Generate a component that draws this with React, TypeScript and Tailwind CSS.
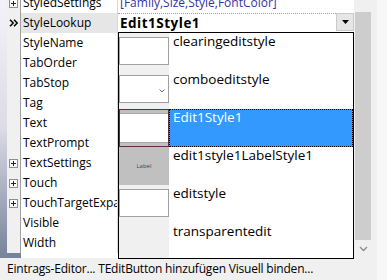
import React from 'react';

type Row = { name: string; plus?: boolean; current?: boolean };

const rows: Row[] = [
  { name: 'StyledSettings', plus: true },
  { name: 'StyleLookup', current: true },
  { name: 'StyleName' },
  { name: 'TabOrder' },
  { name: 'TabStop' },
  { name: 'Tag' },
  { name: 'Text' },
  { name: 'TextPrompt' },
  { name: 'TextSettings', plus: true },
  { name: 'Touch', plus: true },
  { name: 'TouchTargetExpansion', plus: true },
  { name: 'Visible' },
  { name: 'Width' },
];

const PlusBox = () => (
  <svg width="9" height="9" viewBox="0 0 9 9">
    <rect x="0.5" y="0.5" width="8" height="8" fill="#fbfbfb" stroke="#8e8f8f" />
    <path d="M2 4.5h5M4.5 2v5" stroke="#222" />
  </svg>
);

const Current = () => (
  <svg width="10" height="8" viewBox="0 0 10 8">
    <path d="M1 0.8l3.2 3.2-3.2 3.2M5 0.8l3.2 3.2-3.2 3.2" fill="none" stroke="#000" strokeWidth="1.5" />
  </svg>
);

const EditBox = ({ combo }: { combo?: boolean }) => (
  <div className="mt-[4px] h-[28px] border border-[#a0a0a0] bg-white flex items-center justify-end pr-[3px]">
    {combo && (
      <svg width="6" height="4" viewBox="0 0 6 4" className="mt-[3px]">
        <path d="M0.5 0.5l2.5 2.5 2.5-2.5" fill="none" stroke="#6d6d6d" />
      </svg>
    )}
  </div>
);

const items = [
  { name: 'clearingeditstyle', preview: <EditBox /> },
  { name: 'comboeditstyle', preview: <EditBox combo /> },
  { name: 'Edit1Style1', selected: true },
  {
    name: 'edit1style1LabelStyle1',
    preview: (
      <div className="h-full bg-[#c0c0c0] flex items-center justify-center text-[6px] text-[#444]">Label</div>
    ),
  },
  { name: 'editstyle', preview: <EditBox /> },
  { name: 'transparentedit', preview: null },
];

export default function App() {
  return (
    <div className="w-[387px] h-[280px] flex overflow-hidden bg-[#f0f0f0] text-black font-['Open_Sans',sans-serif]">
      <div className="w-[377px] flex flex-col">
        <div className="relative h-[258px] flex">
          <div className="w-[7px] bg-gradient-to-b from-[#f4f2f9] via-[#dcdbe6] to-[#76839a]" />

          <div className="w-[347px] flex flex-col overflow-hidden">
            <div className="-mt-[7px] flex flex-col">
              {rows.map((r) => (
                <div key={r.name} className="flex h-[20px]">
                  <div className="w-[14px] border-r border-[#a0a0a0] flex items-center justify-center">
                    {r.plus && <PlusBox />}
                    {r.current && <Current />}
                  </div>
                  <div
                    className={`w-[97px] pl-[2px] border-r border-[#d8d8d8] text-[12px] leading-[20px] whitespace-nowrap overflow-hidden ${
                      r.current ? 'bg-[#e6e6e6]' : 'bg-white'
                    }`}
                  >
                    {r.name}
                  </div>
                  <div className="w-[236px] bg-white flex">
                    {r.name === 'StyledSettings' && (
                      <span className="pl-[2px] text-[12px] leading-[20px] text-[#3434a4] whitespace-nowrap">
                        [Family,Size,Style,FontColor]
                      </span>
                    )}
                    {r.current && (
                      <>
                        <span className="flex-1 pl-[2px] border-t border-dotted border-[#a0a0a0] text-[13.5px] tracking-[0.5px] font-bold leading-[18px]">
                          Edit1Style1
                        </span>
                        <span className="w-[18px] h-[18px] bg-[#e6e6e6] border border-[#cacaca] flex items-center justify-center">
                          <svg width="7" height="4" viewBox="0 0 7 4">
                            <path d="M0 0h7L3.5 4z" fill="#000" />
                          </svg>
                        </span>
                      </>
                    )}
                  </div>
                </div>
              ))}
            </div>
            <div className="flex-1 flex">
              <div className="w-[14px] bg-[#76839a]" />
              <div className="flex-1 bg-white" />
            </div>
          </div>

          <div className="w-[18px] flex flex-col items-center">
            <div className="h-[12px]" />
            <div className="w-[16px] h-[228px] bg-[#cdcdcd]" />
            <svg width="9" height="6" viewBox="0 0 9 6" className="mt-[6px]">
              <path d="M1 1l3.5 3.5L8 1" fill="none" stroke="#8a8a8a" strokeWidth="1.3" />
            </svg>
          </div>
          <div className="w-[5px]" />

          <div className="absolute left-[118px] top-[32px] w-[236px] h-[227px] border border-black bg-white overflow-hidden flex flex-col">
            {items.map((it) => (
              <div key={it.name} className="flex h-[38px] shrink-0">
                {it.selected ? (
                  <div className="w-[50px] border border-[#5b2f3e] bg-[#c0c0c0] py-[3px]">
                    <div className="h-full bg-white border-y border-[#a8a8a8]" />
                  </div>
                ) : (
                  <div className="w-[50px] bg-[#f0f0f0]">{it.preview}</div>
                )}
                <div
                  className={`flex-1 pl-[3px] text-[13.5px] leading-[15px] border border-dotted ${
                    it.selected ? 'bg-[#3399ff] text-white border-black' : 'border-transparent'
                  }`}
                >
                  {it.name}
                </div>
              </div>
            ))}
          </div>
        </div>

        <div className="h-[22px] pl-[7px] text-[12px] tracking-[-0.2px] leading-[22px] whitespace-nowrap">
          Eintrags-Editor... TEditButton hinzufügen Visuell binden...
        </div>
      </div>
      <div className="w-[10px] bg-[#f7f7f7]" />
    </div>
  );
}
